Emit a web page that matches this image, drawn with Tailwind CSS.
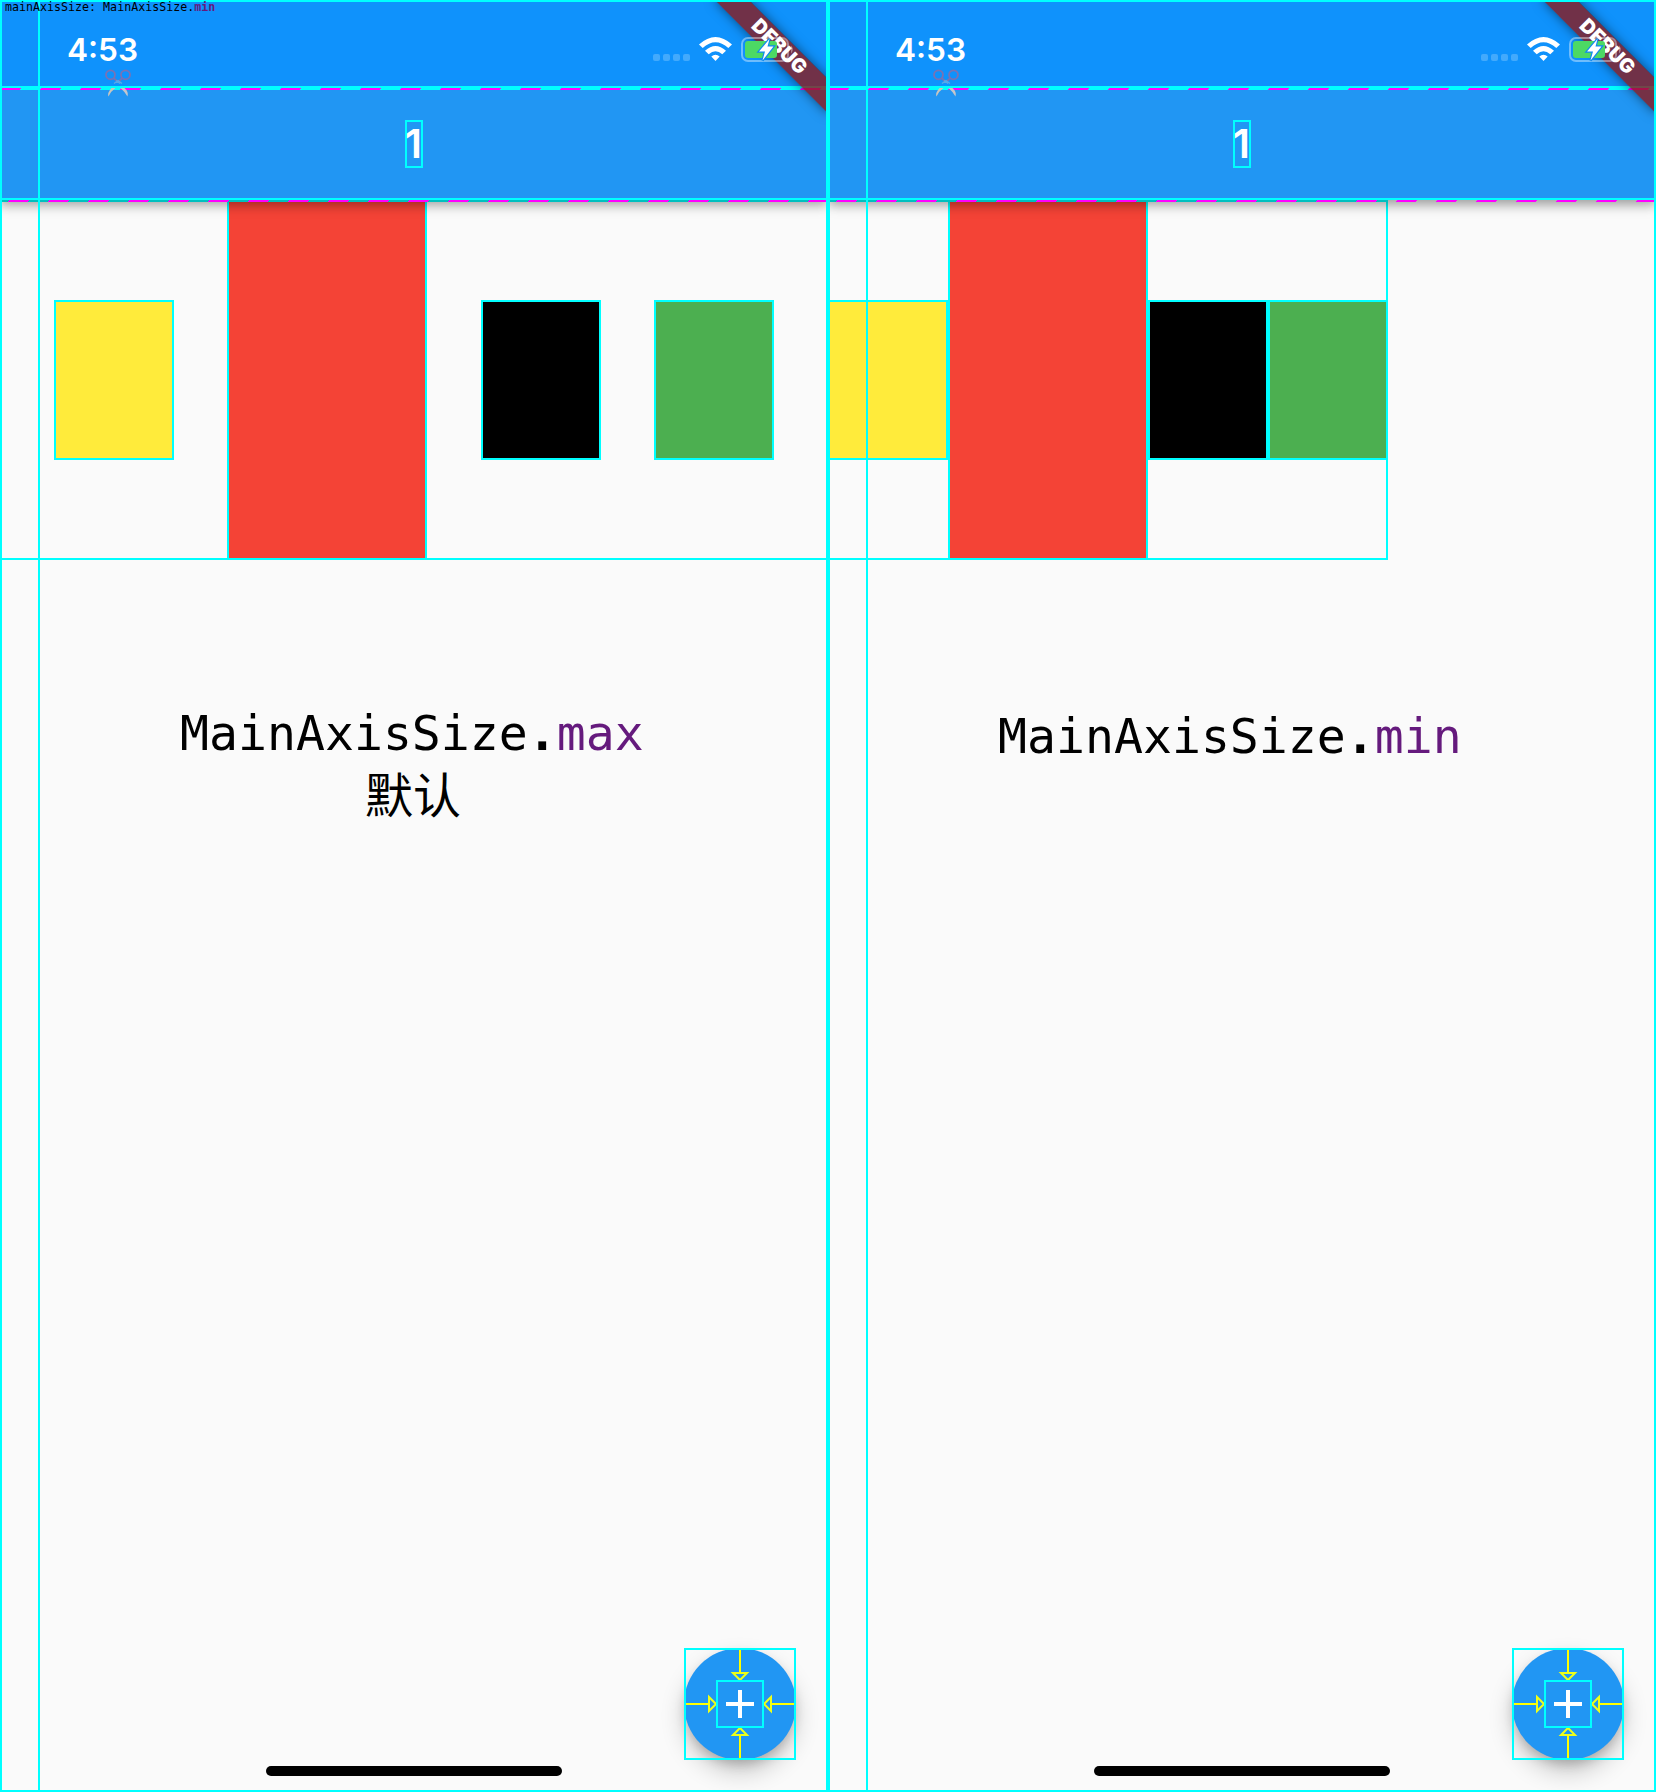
<!DOCTYPE html>
<html lang="zh">
<head>
<meta charset="utf-8">
<title>MainAxisSize</title>
<script src="https://cdn.jsdelivr.net/npm/@tailwindcss/browser@4"></script>
</head>
<body class="w-[1656px] h-[1792px] overflow-hidden bg-[#fafafa]">
<svg class="absolute size-0">
  <defs>
    <pattern id="dash" width="40" height="2" patternUnits="userSpaceOnUse"><path d="M1 0H21V1H20V2H0V1H1Z" fill="#f0f" shape-rendering="crispEdges"/></pattern>
    <symbol id="scissors" viewBox="0 0 26 30">
      <g fill="none" stroke="#7a72b4" stroke-width="1.8"><circle cx="5.500" cy="5.800" r="4.500"/><circle cx="20.500" cy="5.800" r="4.500"/><path d="M8.500 9L12.500 12.500M17.500 9L13.500 12.500"/></g>
      <path d="M9 14.500L13 11.500L17 14.500M11 11.500L15 14.500" fill="none" stroke="#58a9e8" stroke-width="1.400"/>
      <path d="M6.500 19H10.500Q6 22 3.500 27.500Q2 24 6.500 19Z" fill="#c9c5bd"/>
      <path d="M15.500 19H19.500Q24 23 22.500 27.500Q20 23 15.500 19Z" fill="#c5c5cb"/>
    </symbol>
    <symbol id="status" viewBox="0 0 150 30">
      <g fill="#fff" fill-opacity=".22"><rect x="3" y="19" width="7" height="7" rx="2"/><rect x="13" y="19" width="7" height="7" rx="2"/><rect x="23" y="19" width="7" height="7" rx="2"/><rect x="33" y="19" width="7" height="7" rx="2"/></g>
      <path d="M49 9.500Q65.500-5.500 82 9.500L78.300 13.100Q65.500 1.500 52.700 13.100ZM55 15.700Q65.500 6.300 76 15.700L72.300 19.300Q65.500 13.300 58.700 19.300ZM61.300 21.500Q65.500 18 69.700 21.500L65.500 26Z" fill="#fff"/>
      <rect x="92" y="3" width="46" height="23" rx="6" fill="none" stroke="#fff" stroke-opacity=".4" stroke-width="2"/>
      <path d="M141 10.500Q144.500 14.500 141 18.500Z" fill="#fff" fill-opacity=".4"/>
      <rect x="95" y="6" width="32" height="17" rx="3" fill="#4cd964"/>
      <path d="M119.500 4L109 16.500H115L112.500 25.500L123.500 11.500H117.500Z" fill="#fff" stroke="#1089ef" stroke-width="2.400" paint-order="stroke"/>
    </symbol>
    <symbol id="fabguides" viewBox="0 0 112 112">
      <g id="arm"><path d="M56 2V25" stroke="#ff0" stroke-width="2"/><path d="M49 25H63L56 32Z" fill="none" stroke="#eeff1a" stroke-width="2"/></g>
      <use href="#arm" transform="rotate(90 56 56)"/><use href="#arm" transform="rotate(180 56 56)"/><use href="#arm" transform="rotate(270 56 56)"/>
      <path d="M42 56H70M56 42V70" stroke="#fff" stroke-width="4"/>
      <path d="M33 33H79V79H33ZM1 1H111V111H1Z" fill="none" stroke="#0ff" stroke-width="2"/>
    </symbol>
  </defs>
</svg>

<main class="grid grid-cols-2 h-full relative">
  <section class="relative overflow-hidden flex flex-col bg-[#fafafa]">
    <header class="relative z-10 h-[200px] shrink-0 flex flex-col shadow-[0_5px_12px_rgba(0,0,0,0.25),0_4px_10px_rgba(0,0,0,0.16)]">
      <div class="h-[88px] bg-[#0f92fc] border-b-2 border-[#0ff] pl-[67px] pt-[30px]">
        <span class="block font-[Inter] font-semibold text-[31.6px] leading-[39px] text-white">4:53</span>
      </div>
      <div class="h-[112px] bg-[#2196f3] border-y-2 border-[#0ff] flex items-center justify-center">
        <div class="w-[18px] h-12 border-2 border-[#0ff] flex items-center justify-center font-[Inter] font-semibold text-[40px] text-white pr-px">1</div>
      </div>
      <svg class="absolute left-0 top-[88px] w-full h-[2px]"><rect width="828" height="2" fill="url(#dash)"/></svg>
      <svg class="absolute left-0 top-[200px] w-full h-[2px]"><rect width="828" height="2" fill="#00bfbf"/><rect width="820" height="2" fill="url(#dash)" transform="translate(8 0)"/></svg>
      <svg class="absolute left-[105px] top-[69px] w-[26px] h-[30px]"><use href="#scissors"/></svg>
    </header>
    <div class="h-[360px] shrink-0 flex items-center justify-evenly relative">
      <div class="w-[120px] h-40 bg-[#ffeb3b] border-2 border-[#0ff]"></div>
      <div class="w-[200px] h-[360px] bg-[#f44336] border-2 border-[#0ff]"></div>
      <div class="w-[120px] h-40 bg-black border-2 border-[#0ff]"></div>
      <div class="w-[120px] h-40 bg-[#4caf50] border-2 border-[#0ff]"></div>
      <div class="absolute inset-0 border-y-2 border-[#0ff]"></div>
    </div>
    <div class="pt-[143px] pl-[180px] font-['DejaVu_Sans_Mono',monospace] text-[48.15px] leading-[60px] text-black">
      <p class="whitespace-nowrap">MainAxisSize<span class="font-bold">.</span><span class="text-[#651a7d]">max</span></p>
      <p class="pl-[185px] -mt-px font-['Noto_Sans_CJK_SC',sans-serif] text-[48px] whitespace-nowrap">默认</p>
    </div>
    <div class="absolute z-20 right-0 top-0 size-0">
      <div class="absolute left-[-80px] top-[56px] w-[160px] h-6 origin-[80px_-56px] rotate-45 bg-black/45 shadow-[0_0_12px_rgba(0,0,0,0.5)]">
        <div class="h-full bg-[#b71c1c]/60 flex items-center justify-center pr-[3px] font-[Inter] font-black text-[19.8px] leading-none text-white">DEBUG</div>
      </div>
    </div>
    <svg class="absolute z-30 left-[650px] top-[35px] w-[150px] h-[30px]"><use href="#status"/></svg>
    <div class="absolute right-8 bottom-8 size-28 rounded-full bg-[#2196f3] shadow-[0_12px_24px_rgba(0,0,0,0.2),0_6px_12px_-2px_rgba(0,0,0,0.2)]"><svg class="size-28"><use href="#fabguides"/></svg></div>
    <div class="absolute bottom-4 left-[266px] w-[296px] h-[10px] rounded-full bg-black"></div>
    <div class="absolute z-40 inset-0 border-2 border-[#0ff]"></div>
    <div class="absolute z-40 left-[38px] top-0 w-[2px] h-full bg-[#0ff]"></div>
    <p class="absolute z-50 left-[5px] top-0 font-['DejaVu_Sans_Mono',monospace] text-[11.65px] leading-[14px] whitespace-nowrap text-black">mainAxisSize: MainAxisSize.<span class="font-bold text-[#651a7d]">min</span></p>
  </section>

  <section class="relative overflow-hidden flex flex-col bg-[#fafafa]">
    <header class="relative z-10 h-[200px] shrink-0 flex flex-col shadow-[0_5px_12px_rgba(0,0,0,0.25),0_4px_10px_rgba(0,0,0,0.16)]">
      <div class="h-[88px] bg-[#0f92fc] border-b-2 border-[#0ff] pl-[67px] pt-[30px]">
        <span class="block font-[Inter] font-semibold text-[31.6px] leading-[39px] text-white">4:53</span>
      </div>
      <div class="h-[112px] bg-[#2196f3] border-y-2 border-[#0ff] flex items-center justify-center">
        <div class="w-[18px] h-12 border-2 border-[#0ff] flex items-center justify-center font-[Inter] font-semibold text-[40px] text-white pr-px">1</div>
      </div>
      <svg class="absolute left-0 top-[88px] w-full h-[2px]"><rect width="828" height="2" fill="url(#dash)"/></svg>
      <svg class="absolute left-0 top-[200px] w-full h-[2px]"><rect width="560" height="2" fill="#00bfbf"/><rect width="820" height="2" fill="url(#dash)" transform="translate(8 0)"/></svg>
      <svg class="absolute left-[105px] top-[69px] w-[26px] h-[30px]"><use href="#scissors"/></svg>
    </header>
    <div class="h-[360px] w-[560px] shrink-0 relative flex items-center">
      <div class="w-[120px] h-40 bg-[#ffeb3b] border-2 border-[#0ff]"></div>
      <div class="w-[200px] h-[360px] bg-[#f44336] border-2 border-[#0ff]"></div>
      <div class="w-[120px] h-40 bg-black border-2 border-[#0ff]"></div>
      <div class="w-[120px] h-40 bg-[#4caf50] border-2 border-[#0ff]"></div>
      <div class="absolute inset-0 border-2 border-[#0ff]"></div>
    </div>
    <div class="pt-[146px] pl-[170px] font-['DejaVu_Sans_Mono',monospace] text-[48.15px] leading-[60px] text-black">
      <p class="whitespace-nowrap">MainAxisSize<span class="font-bold">.</span><span class="text-[#651a7d]">min</span></p>
    </div>
    <div class="absolute z-20 right-0 top-0 size-0">
      <div class="absolute left-[-80px] top-[56px] w-[160px] h-6 origin-[80px_-56px] rotate-45 bg-black/45 shadow-[0_0_12px_rgba(0,0,0,0.5)]">
        <div class="h-full bg-[#b71c1c]/60 flex items-center justify-center pr-[3px] font-[Inter] font-black text-[19.8px] leading-none text-white">DEBUG</div>
      </div>
    </div>
    <svg class="absolute z-30 left-[650px] top-[35px] w-[150px] h-[30px]"><use href="#status"/></svg>
    <div class="absolute right-8 bottom-8 size-28 rounded-full bg-[#2196f3] shadow-[0_12px_24px_rgba(0,0,0,0.2),0_6px_12px_-2px_rgba(0,0,0,0.2)]"><svg class="size-28"><use href="#fabguides"/></svg></div>
    <div class="absolute bottom-4 left-[266px] w-[296px] h-[10px] rounded-full bg-black"></div>
    <div class="absolute z-40 inset-0 border-2 border-[#0ff]"></div>
    <div class="absolute z-40 left-[38px] top-0 w-[2px] h-full bg-[#0ff]"></div>
  </section>
</main>
</body>
</html>
